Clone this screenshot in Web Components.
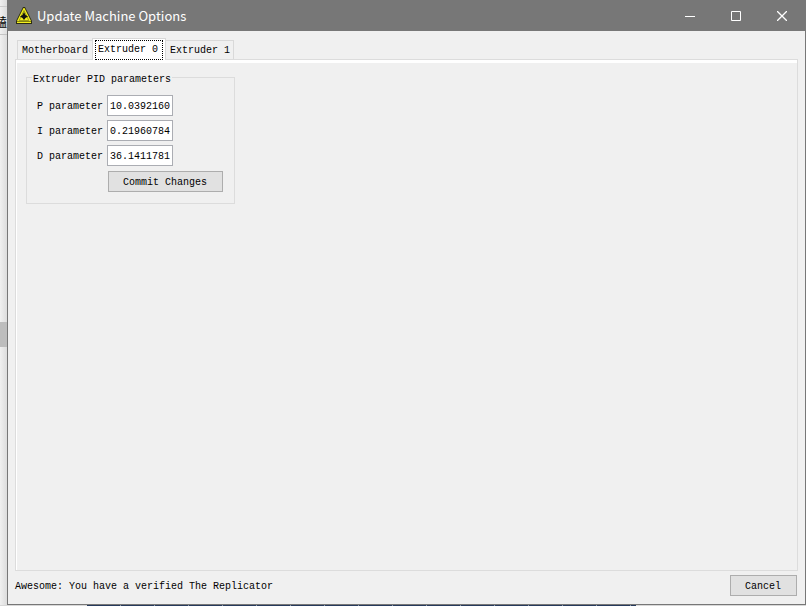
<!DOCTYPE html>
<html lang="en">
<head>
<meta charset="utf-8">
<title>Update Machine Options</title>
<style>
  body {
    margin: 0;
    font: 10px/12px "Liberation Mono", "Noto Sans CJK SC", monospace;
    color: #000;
    background: #f0f0f0;
  }
</style>
</head>
<body>
<desktop-view>
  <desktop-edge slot="edge">磕</desktop-edge>
  <app-window heading="Update Machine Options">
    <tab-pane>
      <tab-button>Motherboard</tab-button>
      <tab-button selected>Extruder 0</tab-button>
      <tab-button>Extruder 1</tab-button>
      <pid-group slot="panel" heading="Extruder PID parameters">
        <param-field label="P parameter" value="10.0392160"></param-field>
        <param-field label="I parameter" value="0.21960784"></param-field>
        <param-field label="D parameter" value="36.1411781"></param-field>
        <push-button slot="action">Commit Changes</push-button>
      </pid-group>
    </tab-pane>
    <span slot="status">Awesome: You have a verified The Replicator</span>
    <push-button slot="footer">Cancel</push-button>
  </app-window>
</desktop-view>

<script>
class BaseElement extends HTMLElement {
    constructor() {
        super();
        this.attachShadow({ mode: "open" });
        const template = document.createElement("template");
        template.innerHTML = this.constructor.markup;
        this.shadowRoot.appendChild(template.content.cloneNode(true));
    }
}

class DesktopView extends BaseElement {
    static markup = `
      <style>
        :host {
          display: grid;
          grid-template-columns: 7px 1fr;
          grid-template-rows: 1fr 1px;
          height: 100vh;
          overflow: hidden;
        }
        .taskbar {
          grid-column: 1 / -1;
          display: grid;
          grid-template-columns: 87fr 549fr 170fr;
          background: #d8d8d8;
        }
        .taskbar i {
          grid-column: 2;
          background: repeating-linear-gradient(90deg, #263a5c 0 33px, #8796a8 33px 34px);
        }
      </style>
      <slot name="edge"></slot>
      <slot></slot>
      <div class="taskbar"><i></i></div>
    `;
}

class DesktopEdge extends BaseElement {
    static markup = `
      <style>
        :host {
          display: flex;
          flex-direction: column;
          overflow: hidden;
          background: linear-gradient(90deg, #f0f0f0, #dcdcdc);
        }
        .cap {
          flex: none;
          height: 6px;
          border-bottom: 1px solid #ccc;
        }
        .text {
          flex: none;
          display: flex;
          justify-content: flex-end;
          height: 27px;
          line-height: 34px;
          font-size: 12px;
          border-bottom: 1px solid #c4c4c4;
        }
        .track {
          flex: 1;
          display: grid;
          grid-template-rows: 287fr 25fr 258fr;
        }
        .thumb {
          grid-row: 2;
          background: #bdbdbd;
        }
      </style>
      <div class="cap"></div>
      <div class="text"><slot></slot></div>
      <div class="track"><div class="thumb"></div></div>
    `;
}

class AppWindow extends BaseElement {
    static markup = `
      <style>
        :host {
          display: flex;
          flex-direction: column;
          min-width: 0;
          box-sizing: border-box;
          border: 1px solid #777;
          border-top: 0;
          background: #f0f0f0;
        }
        header {
          display: flex;
          align-items: center;
          height: 31px;
          padding-left: 8px;
          background: #777;
          color: #fff;
        }
        .logo {
          width: 16px;
          height: 17px;
        }
        h1 {
          flex: 1;
          margin: 0 0 0 5px;
          font: 13px/18px "Noto Sans CJK SC", sans-serif;
        }
        header button {
          display: grid;
          place-items: center;
          width: 46px;
          height: 31px;
          padding: 0;
          border: 0;
          background: none;
          color: inherit;
        }
        main {
          flex: 1;
          display: flex;
          padding: 7px 7px 0;
        }
        ::slotted(tab-pane) {
          flex: 1;
        }
        footer {
          display: flex;
          justify-content: space-between;
          align-items: flex-end;
          padding: 4px 8px 8px 7px;
        }
        ::slotted(span) {
          padding-bottom: 3px;
        }
      </style>
      <header>
        <svg class="logo" viewBox="0 0 16 17" aria-hidden="true">
          <path d="M7 0H9L16 14V17H0V14Z" fill="#2c2c12"/>
          <path d="M7.5 1H8.5L15 14V16H1V14Z" fill="#f4f01e"/>
          <path d="M8 3.5L12.8 13.5H3.2Z" fill="#f4f01e" stroke="#8a8a10" stroke-width=".8"/>
          <path d="M8 5L9.5 8L12 9.5L9.5 11L8 13L6.500 11L4 9.500L6.500 8Z" fill="#111"/>
          <path d="M1 14.500H15" stroke="#55550c" stroke-width=".7"/>
        </svg>
        <h1></h1>
        <button type="button" aria-label="Minimize">
          <svg width="10" height="10" viewBox="0 0 10 10"><path d="M0 5.5H10" stroke="#fff"/></svg>
        </button>
        <button type="button" aria-label="Maximize">
          <svg width="10" height="10" viewBox="0 0 10 10"><path d="M.5 .5H9.5V9.5H.5Z" fill="none" stroke="#fff"/></svg>
        </button>
        <button type="button" aria-label="Close">
          <svg width="10" height="10" viewBox="0 0 10 10"><path d="M0 0L10 10M10 0L0 10" stroke="#fff" stroke-width="1.3"/></svg>
        </button>
      </header>
      <main><slot></slot></main>
      <footer><slot name="status"></slot><slot name="footer"></slot></footer>
    `;

    connectedCallback() {
        this.shadowRoot.querySelector("h1").textContent = this.getAttribute("heading");
    }
}

class TabPane extends BaseElement {
    static markup = `
      <style>
        :host {
          display: flex;
          flex-direction: column;
        }
        nav {
          display: flex;
          align-items: flex-end;
          height: 21px;
          padding-left: 2px;
        }
        .panel {
          flex: 1;
          padding: 9px 10px;
          border: 1px solid #dcdcdc;
          box-shadow: inset 0 3px #fff, inset 1px 0 #fff;
        }
      </style>
      <nav role="tablist"><slot></slot></nav>
      <div class="panel" role="tabpanel"><slot name="panel"></slot></div>
    `;
}

class TabButton extends BaseElement {
    static markup = `
      <style>
        :host {
          display: block;
        }
        button {
          display: block;
          height: 19px;
          padding: 2px 4px 0;
          border: solid #d9d9d9;
          border-width: 1px 0 0 1px;
          background: #f0f0f0;
          font: inherit;
          color: inherit;
          white-space: nowrap;
        }
        :host(:last-of-type) button {
          padding-right: 3px;
          border-width: 1px 1px 0 0;
        }
        :host([selected]) {
          position: relative;
          margin-bottom: -1px;
        }
        :host([selected]) button {
          height: 22px;
          padding: 1px 2px;
          border-width: 1px 1px 0;
          background: #fff;
        }
        :host([selected]) span {
          display: block;
          padding: 3px 4px 3px 2px;
          border: 1px dotted #000;
        }
      </style>
      <button type="button" role="tab"><span><slot></slot></span></button>
    `;

    connectedCallback() {
        const button = this.shadowRoot.querySelector("button");
        button.setAttribute("aria-selected", this.hasAttribute("selected"));
    }
}

class PidGroup extends BaseElement {
    static markup = `
      <style>
        :host {
          display: block;
          width: fit-content;
        }
        fieldset {
          display: flex;
          flex-direction: column;
          gap: 4px;
          margin: 0;
          padding: 9px 11px 11px 10px;
          border: 1px solid #dcdcdc;
        }
        legend {
          margin-left: -5px;
          padding: 5px 1px 0;
        }
        .action {
          display: flex;
          justify-content: flex-end;
          padding: 1px 0 0 71px;
        }
      </style>
      <fieldset>
        <legend></legend>
        <slot></slot>
        <div class="action"><slot name="action"></slot></div>
      </fieldset>
    `;

    connectedCallback() {
        this.shadowRoot.querySelector("legend").textContent = this.getAttribute("heading");
    }
}

class ParamField extends BaseElement {
    static markup = `
      <style>
        :host {
          display: flex;
          align-items: center;
          gap: 4px;
        }
        label {
          padding-top: 2px;
        }
        input {
          box-sizing: border-box;
          width: 66px;
          height: 21px;
          padding: 1px 1px 0 2px;
          border: 1px solid #abadb3;
          background: #fff;
          font: inherit;
          color: inherit;
        }
      </style>
      <label for="value"></label>
      <input id="value" type="text">
    `;

    connectedCallback() {
        this.shadowRoot.querySelector("label").textContent = this.getAttribute("label");
        this.shadowRoot.querySelector("input").value = this.getAttribute("value");
    }
}

class PushButton extends BaseElement {
    static markup = `
      <style>
        :host {
          display: block;
        }
        button {
          display: block;
          height: 21px;
          padding: 2px 15px 0 14px;
          border: 1px solid #adadad;
          background: #e1e1e1;
          font: inherit;
          color: inherit;
          white-space: nowrap;
        }
      </style>
      <button type="button"><slot></slot></button>
    `;
}

customElements.define("desktop-view", DesktopView);
customElements.define("desktop-edge", DesktopEdge);
customElements.define("app-window", AppWindow);
customElements.define("tab-pane", TabPane);
customElements.define("tab-button", TabButton);
customElements.define("pid-group", PidGroup);
customElements.define("param-field", ParamField);
customElements.define("push-button", PushButton);
</script>
</body>
</html>
